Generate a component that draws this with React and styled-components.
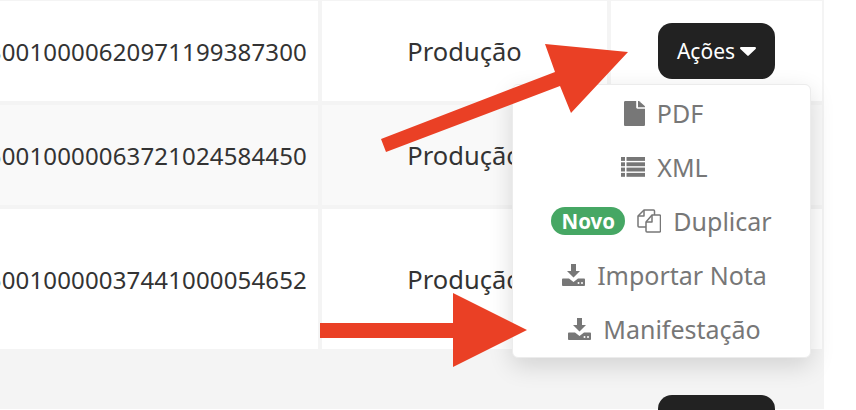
import React from "react";
import styled, { createGlobalStyle } from "styled-components";

const GlobalStyle = createGlobalStyle`
  html, body {
    margin: 0;
    padding: 0;
    background: #fff;
    overflow: hidden;
  }
`;

const Page = styled.div`
  position: relative;
  width: 856px;
  height: 410px;
  overflow: hidden;
  font-family: "Noto Sans", "Open Sans", sans-serif;
  background: #fff;
`;

const Table = styled.div`
  width: 824px;
  height: 409px;
  padding-top: 1px;
  box-sizing: border-box;
  background: #f4f4f4;
  display: flex;
  flex-direction: column;
  gap: 4px;
`;

const Row = styled.div`
  display: grid;
  grid-template-columns: 318px 285px 211px;
  column-gap: 4px;
  height: ${(p) => p.$height}px;
  flex: none;
`;

const Cell = styled.div`
  background: ${(p) => (p.$alt ? "#f9f9f9" : "#fff")};
  display: flex;
  align-items: center;
  color: #333;
  overflow: hidden;
  white-space: nowrap;
`;

const KeyCell = styled(Cell)`
  justify-content: flex-end;
  padding-right: 11px;
  font-size: 24px;
  letter-spacing: 0.15px;
`;

const EnvCell = styled(Cell)`
  justify-content: center;
  font-size: 25.5px;
`;

const ActionCell = styled(Cell)`
  justify-content: center;
`;

const ActionButton = styled.button`
  width: 117px;
  height: 56px;
  border: 0;
  border-radius: 14px;
  background: #222;
  color: #fff;
  font-family: inherit;
  font-size: 21px;
  display: flex;
  align-items: center;
  justify-content: center;
  gap: 5px;
  padding: 0;
`;

const LastButton = styled(ActionButton)`
  position: absolute;
  left: 658px;
  top: 395px;
`;

const Menu = styled.div`
  position: absolute;
  left: 512px;
  top: 84px;
  width: 299px;
  height: 274px;
  box-sizing: border-box;
  padding: 1px 0;
  background: #fff;
  border: 1px solid #ececec;
  border-radius: 6px;
  box-shadow: 0 8px 24px rgba(0, 0, 0, 0.14);
  display: flex;
  flex-direction: column;
`;

const MenuItem = styled.div`
  height: 54.4px;
  display: flex;
  align-items: center;
  justify-content: center;
  gap: 12px;
  padding-left: ${(p) => p.$indent}px;
  color: #777;
  font-size: 25px;
  white-space: nowrap;
`;

const Badge = styled.span`
  background: #46a764;
  color: #fff;
  font-size: 20.5px;
  font-weight: 700;
  border-radius: 14px;
  height: 28px;
  width: 74px;
  display: flex;
  align-items: center;
  justify-content: center;
`;

const Arrows = styled.svg`
  position: absolute;
  left: 0;
  top: 0;
`;

const CaretIcon = () => (
  <svg width="16" height="9" viewBox="0 0 16 9" fill="#fff">
    <path d="M1.2 0h13.6c1 0 1.5 1.2.8 1.9L8.7 8.6c-.4.4-1 .4-1.4 0L.4 1.9C-.3 1.2.2 0 1.2 0z" />
  </svg>
);

const FileIcon = () => (
  <svg width="21" height="25" viewBox="0 0 21 25" fill="#777">
    <path d="M12.2 0v6.6c0 .7.6 1.2 1.3 1.2H21v15.9c0 .7-.6 1.3-1.3 1.3H1.3C.6 25 0 24.4 0 23.7V1.3C0 .6.6 0 1.3 0z" />
    <path d="M14 0h.3c.4 0 .7.1 1 .3l5.4 4.8c.2.3.3.6.3.9v.3h-7z" />
  </svg>
);

const ListIcon = () => (
  <svg width="24" height="20" viewBox="0 0 24 20" fill="#777">
    {[0, 5.3, 10.6, 15.9].map((y) => (
      <g key={y}>
        <rect x="0" y={y} width="4" height="3.9" />
        <rect x="5.5" y={y} width="18.5" height="3.9" />
      </g>
    ))}
  </svg>
);

const CopyIcon = () => (
  <svg width="24" height="24" viewBox="0 0 24 24" fill="none" stroke="#777" strokeWidth="1.5" strokeLinejoin="round">
    <path d="M9 18H2a1 1 0 0 1-1-1V7l6-6h9.5a1 1 0 0 1 1 1v4" />
    <path d="M7 1v6H1" />
    <path d="M9 13l6-7h7.5a1 1 0 0 1 1 1v15a1 1 0 0 1-1 1H10a1 1 0 0 1-1-1z" />
    <path d="M15 6v7H9" />
  </svg>
);

const DownloadIcon = () => (
  <svg width="23" height="22" viewBox="0 0 23 22" fill="#777">
    <path d="M9 0h5v7h4l-6.5 6.5L5 7h4z" />
    <path d="M0 15.5C0 15 .5 14.5 1 14.5h6l4.5 3.5 4.5-3.5h6c.5 0 1 .5 1 1V21c0 .5-.5 1-1 1H1c-.5 0-1-.5-1-1z" />
    <circle cx="16.5" cy="19" r="1" fill="#fff" />
    <circle cx="20" cy="19" r="1" fill="#fff" />
  </svg>
);

const rows = [
  { key: "30010000620971199387300", height: 100 },
  { key: "50010000063721024584450", height: 100, alt: true },
  { key: "50010000037441000054652", height: 140 },
];

export default function App() {
  return (
    <Page>
      <GlobalStyle />
      <Table>
        {rows.map((r, i) => (
          <Row key={r.key} $height={r.height}>
            <KeyCell $alt={r.alt}>{r.key}</KeyCell>
            <EnvCell $alt={r.alt}>Produção</EnvCell>
            <ActionCell $alt={r.alt}>
              {i === 0 && (
                <ActionButton>
                  Ações
                  <CaretIcon />
                </ActionButton>
              )}
            </ActionCell>
          </Row>
        ))}
      </Table>
      <LastButton />
      <Menu>
        <MenuItem $indent={4}>
          <FileIcon />
          PDF
        </MenuItem>
        <MenuItem $indent={6}>
          <ListIcon />
          XML
        </MenuItem>
        <MenuItem $indent={0}>
          <Badge>Novo</Badge>
          <CopyIcon />
          Duplicar
        </MenuItem>
        <MenuItem $indent={6}>
          <DownloadIcon />
          Importar Nota
        </MenuItem>
        <MenuItem $indent={6}>
          <DownloadIcon />
          Manifestação
        </MenuItem>
      </Menu>
      <Arrows width="856" height="410" viewBox="0 0 856 410">
        <polygon fill="#ea4025" points="381,139 555,72 545,44 628,52 571,113 560,86 386,152" />
        <polygon fill="#ea4025" points="320,323 453,323 453,293 527,330 453,367 453,338 320,338" />
      </Arrows>
    </Page>
  );
}
